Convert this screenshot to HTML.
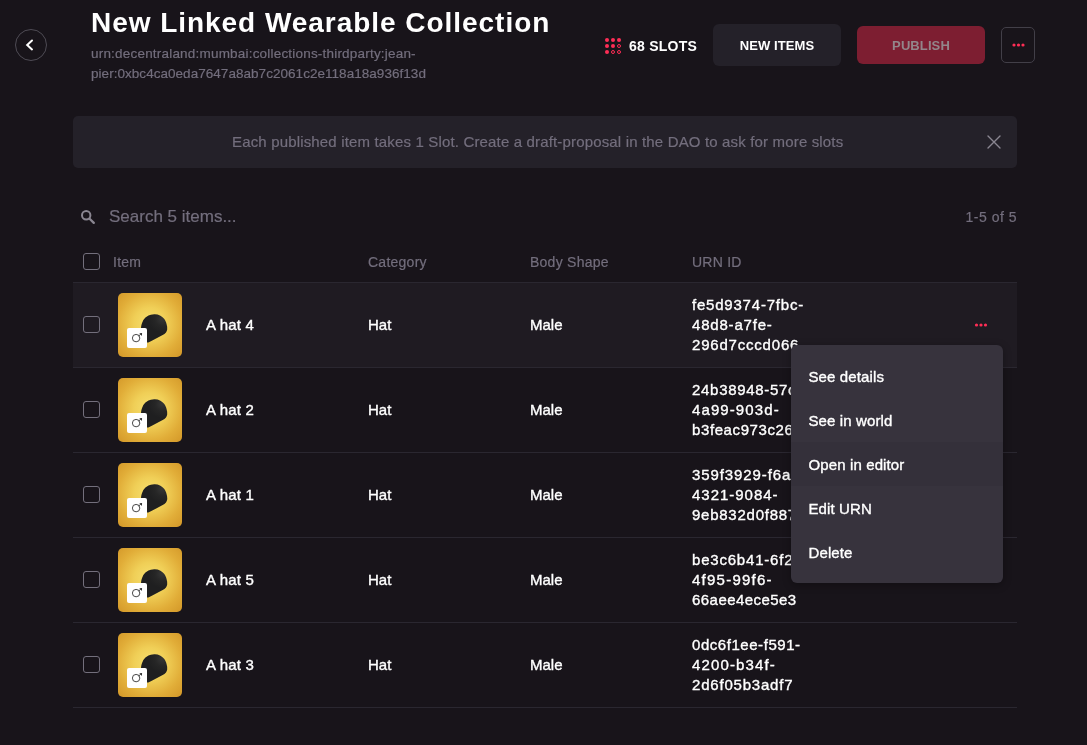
<!DOCTYPE html>
<html lang="en">
<head>
<meta charset="utf-8">
<title>New Linked Wearable Collection</title>
<style>
*{box-sizing:border-box;margin:0;padding:0}
html,body{width:1087px;height:745px;overflow:hidden;background:#18141a;}
body{font-family:"Liberation Sans",Arial,sans-serif;color:#fff;position:relative;-webkit-font-smoothing:antialiased}
.abs{position:absolute;white-space:nowrap}
.back{left:15px;top:29px;width:32px;height:32px;border-radius:50%;border:1px solid #4f4c55}
.back svg{position:absolute;left:0;top:0}
.title{left:91px;top:4px;font-size:28px;line-height:38px;font-weight:bold;letter-spacing:0.96px}
.sub{left:91px;font-size:13.5px;line-height:20px;color:#736e7d;letter-spacing:0.15px}
.slots{left:629px;top:36px;font-size:14px;line-height:20px;font-weight:bold;letter-spacing:0.25px}
.btn{border-radius:6px;font-size:13px;font-weight:bold;text-align:center;letter-spacing:0.1px}
.new{left:713px;top:24px;width:128px;height:42px;background:#242129;line-height:44px}
.pub{left:857px;top:26px;width:128px;height:38px;background:#7d1e31;line-height:39px;color:#93868a}
.more{left:1001px;top:27px;width:34px;height:36px;border:1px solid #423f48;border-radius:5px}
.banner{left:73px;top:116px;width:944px;height:52px;background:#242129;border-radius:5px;color:#736e7d;font-size:15px;line-height:52px;letter-spacing:0.16px}
.banner span{position:absolute;left:159px}
.search{left:109px;top:205px;font-size:17px;line-height:24px;color:#736e7d}
.count{right:70px;top:207px;font-size:14px;line-height:20px;color:#736e7d;letter-spacing:0.5px}
.th{top:252px;font-size:14px;line-height:20px;color:#736e7d;letter-spacing:0.25px}
.cb{left:83px;width:17px;height:17px;border:1px solid #736f7c;border-radius:3px}
.banner,.sub,.search,.th,.count{-webkit-text-stroke:0.2px #736e7d}
.hline{left:73px;width:944px;height:1px;background:#2a2730}
.row{left:73px;width:944px;height:84px}
.row.hov{background:#1f1b22}
.thumb{left:45px;top:10px;width:64px;height:64px;border-radius:5px;background:radial-gradient(circle at 50% 48%,#f6e071 0%,#f0cf57 35%,#e1ad38 70%,#d39728 100%);overflow:hidden}
.badge{left:54px;top:45px;width:20px;height:20px;background:#fff;border-radius:2px}
.name,.cat,.shape{top:32px;font-size:15px;line-height:20px;-webkit-text-stroke:0.36px #fff}
.name{left:133px;letter-spacing:0.2px}.cat{left:295px}.shape{left:457px}
.urn{left:619px;top:12px;font-size:15px;line-height:20px;-webkit-text-stroke:0.36px #fff}
.urn span{display:block}
.menu{left:791px;top:345px;width:212px;height:237.5px;background:#37333d;border-radius:6px;padding:9px 0 7px;box-shadow:0 2px 8px rgba(0,0,0,.3)}
.menu div{height:44px;line-height:45px;padding-left:17.5px;font-size:15px;letter-spacing:0.12px;-webkit-text-stroke:0.36px #fff}
.menu div.h{background:#34303a}
</style>
</head>
<body>
<div id="wrap" style="position:absolute;left:0;top:0;width:1087px;height:745px;will-change:transform">
<svg width="0" height="0" style="position:absolute"><defs><radialGradient id="hg" gradientUnits="userSpaceOnUse" cx="44" cy="26" r="14"><stop offset="0" stop-color="#353535"/><stop offset="0.5" stop-color="#262626"/><stop offset="1" stop-color="#1f1f20"/></radialGradient></defs></svg>
<div class="abs back"><svg width="30" height="30" viewBox="0 0 30 30"><path d="M16 10.5 L11.2 14.95 L16 19.4" fill="none" stroke="#fff" stroke-width="2" stroke-linecap="round" stroke-linejoin="miter"/></svg></div>
<div class="abs title">New Linked Wearable Collection</div>
<div class="abs sub" style="top:44px;letter-spacing:0.2px">urn:decentraland:mumbai:collections-thirdparty:jean-</div>
<div class="abs sub" style="top:64px;letter-spacing:0.04px">pier:0xbc4ca0eda7647a8ab7c2061c2e118a18a936f13d</div>

<svg class="abs" style="left:604px;top:37px" width="18" height="18" viewBox="0 0 18 18">
<g fill="#ff2d55"><circle cx="3" cy="3" r="2"/><circle cx="9" cy="3" r="2"/><circle cx="15" cy="3" r="2"/><circle cx="3" cy="9" r="2"/><circle cx="9" cy="9" r="2"/><circle cx="3" cy="15" r="2"/></g>
<g fill="none" stroke="#ff2d55" stroke-width="1"><circle cx="15" cy="9" r="1.5"/><circle cx="9" cy="15" r="1.5"/><circle cx="15" cy="15" r="1.5"/></g>
</svg>
<div class="abs slots">68 SLOTS</div>
<div class="abs btn new">NEW ITEMS</div>
<div class="abs btn pub">PUBLISH</div>
<div class="abs more"><svg width="32" height="34" viewBox="0 0 32 34"><g fill="#ff2d55"><circle cx="12" cy="17" r="1.6"/><circle cx="16.5" cy="17" r="1.6"/><circle cx="21" cy="17" r="1.6"/></g></svg></div>

<div class="abs banner"><span>Each published item takes 1 Slot. Create a draft-proposal in the DAO to ask for more slots</span>
<svg class="abs" style="left:913px;top:18px" width="16" height="16" viewBox="0 0 16 16"><path d="M2 2 L14 14 M14 2 L2 14" stroke="#8a8691" stroke-width="1.4" fill="none" stroke-linecap="round"/></svg></div>

<svg class="abs" style="left:80px;top:209px" width="16" height="16" viewBox="0 0 16 16"><circle cx="6.2" cy="6.3" r="4.2" fill="none" stroke="#8a8691" stroke-width="2"/><path d="M9.6 9.7 L13.8 13.9" stroke="#8a8691" stroke-width="2.3" stroke-linecap="round"/></svg>
<div class="abs search">Search 5 items...</div>
<div class="abs count">1-5 of 5</div>

<div class="abs cb" style="top:253px"></div>
<div class="abs th" style="left:113px">Item</div>
<div class="abs th" style="left:368px">Category</div>
<div class="abs th" style="left:530px">Body Shape</div>
<div class="abs th" style="left:692px">URN ID</div>
<div class="abs hline" style="top:282px"></div>

<div class="abs row hov" style="top:283px">
 <div class="abs cb" style="left:10px;top:33px"></div>
 <div class="abs thumb"><svg width="64" height="64" viewBox="0 0 64 64"><path d="M23 35 C23.2 32 23.8 30.5 24.6 28.7 C25.5 26.5 26.8 25.2 28.2 24.1 C29.8 22.9 31.2 22.2 32.8 21.8 C34.2 21.3 35.5 21.1 36.9 21.2 C38.8 21.2 40.4 21.6 42 22.4 C43.6 23.2 45 24.3 46.1 25.7 C47.4 27.4 48.2 29.2 48.6 31.3 C49.1 33 49.4 34.8 49.2 36.6 C49 37.8 48.6 38.7 48 39.4 C47.1 40.4 45.9 41.3 44.7 42 L33.4 48.1 C32.4 48.7 31.4 49.2 30.3 49.4 L25 49.5 L22 44 Z" fill="url(#hg)"/></svg></div>
 <div class="abs badge"><svg width="20" height="20" viewBox="0 0 20 20"><circle cx="9.1" cy="10.1" r="3.7" fill="none" stroke="#333" stroke-width="0.9"/><path d="M11.6 8 L13.8 6.2" fill="none" stroke="#333" stroke-width="0.9"/><path d="M12.3 5.2 L15.1 5 L14.9 7.9 Z" fill="#333"/></svg></div>
 <div class="abs name">A hat 4</div><div class="abs cat">Hat</div><div class="abs shape">Male</div>
 <div class="abs urn"><span style="letter-spacing:0.79px">fe5d9374-7fbc-</span><span style="letter-spacing:0.81px">48d8-a7fe-</span><span style="letter-spacing:0.8px">296d7cccd066</span></div>
 <svg class="abs" style="left:900px;top:38px" width="16" height="8" viewBox="0 0 16 8"><g fill="#ff2d55"><circle cx="3.5" cy="4" r="1.6"/><circle cx="8" cy="4" r="1.6"/><circle cx="12.5" cy="4" r="1.6"/></g></svg>
</div>
<div class="abs hline" style="top:367px"></div>

<div class="abs row" style="top:368px">
 <div class="abs cb" style="left:10px;top:33px"></div>
 <div class="abs thumb"><svg width="64" height="64" viewBox="0 0 64 64"><path d="M23 35 C23.2 32 23.8 30.5 24.6 28.7 C25.5 26.5 26.8 25.2 28.2 24.1 C29.8 22.9 31.2 22.2 32.8 21.8 C34.2 21.3 35.5 21.1 36.9 21.2 C38.8 21.2 40.4 21.6 42 22.4 C43.6 23.2 45 24.3 46.1 25.7 C47.4 27.4 48.2 29.2 48.6 31.3 C49.1 33 49.4 34.8 49.2 36.6 C49 37.8 48.6 38.7 48 39.4 C47.1 40.4 45.9 41.3 44.7 42 L33.4 48.1 C32.4 48.7 31.4 49.2 30.3 49.4 L25 49.5 L22 44 Z" fill="url(#hg)"/></svg></div>
 <div class="abs badge"><svg width="20" height="20" viewBox="0 0 20 20"><circle cx="9.1" cy="10.1" r="3.7" fill="none" stroke="#333" stroke-width="0.9"/><path d="M11.6 8 L13.8 6.2" fill="none" stroke="#333" stroke-width="0.9"/><path d="M12.3 5.2 L15.1 5 L14.9 7.9 Z" fill="#333"/></svg></div>
 <div class="abs name">A hat 2</div><div class="abs cat">Hat</div><div class="abs shape">Male</div>
 <div class="abs urn"><span style="letter-spacing:0.7px">24b38948-57c6-</span><span style="letter-spacing:1.1px">4a99-903d-</span><span style="letter-spacing:0.6px">b3feac973c26</span></div>
</div>
<div class="abs hline" style="top:452px"></div>

<div class="abs row" style="top:453px">
 <div class="abs cb" style="left:10px;top:33px"></div>
 <div class="abs thumb"><svg width="64" height="64" viewBox="0 0 64 64"><path d="M23 35 C23.2 32 23.8 30.5 24.6 28.7 C25.5 26.5 26.8 25.2 28.2 24.1 C29.8 22.9 31.2 22.2 32.8 21.8 C34.2 21.3 35.5 21.1 36.9 21.2 C38.8 21.2 40.4 21.6 42 22.4 C43.6 23.2 45 24.3 46.1 25.7 C47.4 27.4 48.2 29.2 48.6 31.3 C49.1 33 49.4 34.8 49.2 36.6 C49 37.8 48.6 38.7 48 39.4 C47.1 40.4 45.9 41.3 44.7 42 L33.4 48.1 C32.4 48.7 31.4 49.2 30.3 49.4 L25 49.5 L22 44 Z" fill="url(#hg)"/></svg></div>
 <div class="abs badge"><svg width="20" height="20" viewBox="0 0 20 20"><circle cx="9.1" cy="10.1" r="3.7" fill="none" stroke="#333" stroke-width="0.9"/><path d="M11.6 8 L13.8 6.2" fill="none" stroke="#333" stroke-width="0.9"/><path d="M12.3 5.2 L15.1 5 L14.9 7.9 Z" fill="#333"/></svg></div>
 <div class="abs name">A hat 1</div><div class="abs cat">Hat</div><div class="abs shape">Male</div>
 <div class="abs urn"><span style="letter-spacing:0.9px">359f3929-f6ab-</span><span style="letter-spacing:0.98px">4321-9084-</span><span style="letter-spacing:0.75px">9eb832d0f887</span></div>
</div>
<div class="abs hline" style="top:537px"></div>

<div class="abs row" style="top:538px">
 <div class="abs cb" style="left:10px;top:33px"></div>
 <div class="abs thumb"><svg width="64" height="64" viewBox="0 0 64 64"><path d="M23 35 C23.2 32 23.8 30.5 24.6 28.7 C25.5 26.5 26.8 25.2 28.2 24.1 C29.8 22.9 31.2 22.2 32.8 21.8 C34.2 21.3 35.5 21.1 36.9 21.2 C38.8 21.2 40.4 21.6 42 22.4 C43.6 23.2 45 24.3 46.1 25.7 C47.4 27.4 48.2 29.2 48.6 31.3 C49.1 33 49.4 34.8 49.2 36.6 C49 37.8 48.6 38.7 48 39.4 C47.1 40.4 45.9 41.3 44.7 42 L33.4 48.1 C32.4 48.7 31.4 49.2 30.3 49.4 L25 49.5 L22 44 Z" fill="url(#hg)"/></svg></div>
 <div class="abs badge"><svg width="20" height="20" viewBox="0 0 20 20"><circle cx="9.1" cy="10.1" r="3.7" fill="none" stroke="#333" stroke-width="0.9"/><path d="M11.6 8 L13.8 6.2" fill="none" stroke="#333" stroke-width="0.9"/><path d="M12.3 5.2 L15.1 5 L14.9 7.9 Z" fill="#333"/></svg></div>
 <div class="abs name">A hat 5</div><div class="abs cat">Hat</div><div class="abs shape">Male</div>
 <div class="abs urn"><span style="letter-spacing:0.8px">be3c6b41-6f2d-</span><span style="letter-spacing:1.24px">4f95-99f6-</span><span style="letter-spacing:0.45px">66aee4ece5e3</span></div>
</div>
<div class="abs hline" style="top:622px"></div>

<div class="abs row" style="top:623px">
 <div class="abs cb" style="left:10px;top:33px"></div>
 <div class="abs thumb"><svg width="64" height="64" viewBox="0 0 64 64"><path d="M23 35 C23.2 32 23.8 30.5 24.6 28.7 C25.5 26.5 26.8 25.2 28.2 24.1 C29.8 22.9 31.2 22.2 32.8 21.8 C34.2 21.3 35.5 21.1 36.9 21.2 C38.8 21.2 40.4 21.6 42 22.4 C43.6 23.2 45 24.3 46.1 25.7 C47.4 27.4 48.2 29.2 48.6 31.3 C49.1 33 49.4 34.8 49.2 36.6 C49 37.8 48.6 38.7 48 39.4 C47.1 40.4 45.9 41.3 44.7 42 L33.4 48.1 C32.4 48.7 31.4 49.2 30.3 49.4 L25 49.5 L22 44 Z" fill="url(#hg)"/></svg></div>
 <div class="abs badge"><svg width="20" height="20" viewBox="0 0 20 20"><circle cx="9.1" cy="10.1" r="3.7" fill="none" stroke="#333" stroke-width="0.9"/><path d="M11.6 8 L13.8 6.2" fill="none" stroke="#333" stroke-width="0.9"/><path d="M12.3 5.2 L15.1 5 L14.9 7.9 Z" fill="#333"/></svg></div>
 <div class="abs name">A hat 3</div><div class="abs cat">Hat</div><div class="abs shape">Male</div>
 <div class="abs urn"><span style="letter-spacing:0.55px">0dc6f1ee-f591-</span><span style="letter-spacing:1.14px">4200-b34f-</span><span style="letter-spacing:0.8px">2d6f05b3adf7</span></div>
</div>
<div class="abs hline" style="top:707px"></div>

<div class="abs menu">
<div>See details</div><div>See in world</div><div class="h">Open in editor</div><div>Edit URN</div><div>Delete</div>
</div>
</div>
</body>
</html>
